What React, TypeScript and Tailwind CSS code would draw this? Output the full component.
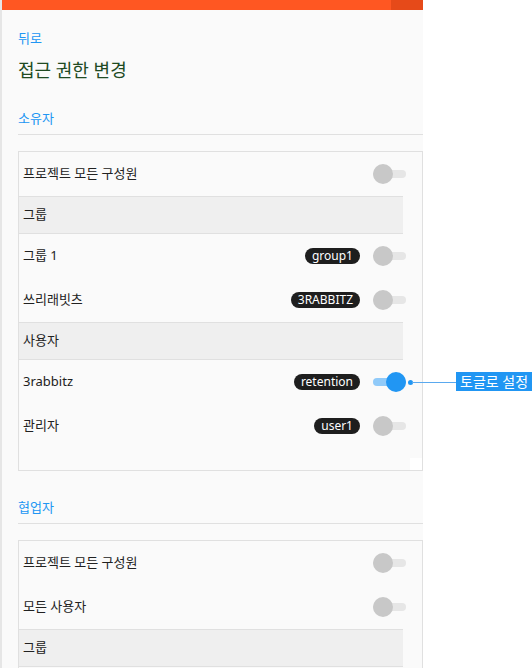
function Toggle({ on = false }: { on?: boolean }) {
  return (
    <div className="relative w-[33px] h-[20px] shrink-0">
      <div
        className={`absolute left-0 right-0 top-[6px] h-[8px] rounded-full ${on ? "bg-[#90caf9]" : "bg-[#e6e6e6]"}`}
      />
      <div
        className={`absolute top-0 size-[20px] rounded-full ${on ? "left-[13px] bg-[#2196f3]" : "left-0 bg-[#c8c8c8]"}`}
      />
    </div>
  )
}

function Chip({ label }: { label: string }) {
  return (
    <span className="h-[16px] px-[7px] rounded-full bg-[#1e1e1e] text-white text-[12px] leading-[16px] mr-[13px]">
      {label}
    </span>
  )
}

function Row({ label, chip, on }: { label: string; chip?: string; on?: boolean }) {
  return (
    <div className="h-[44px] flex items-center pl-[4px] pr-[16px]">
      <span className="flex-1 text-[13px] text-[#212121]">{label}</span>
      {chip && <Chip label={chip} />}
      <Toggle on={on} />
    </div>
  )
}

function GroupHeader({ label }: { label: string }) {
  return (
    <div className="h-[38px] mr-[19px] flex items-center pl-[4px] bg-[#efefef] border-y border-[#e0e0e0] text-[13px] text-[#212121]">
      {label}
    </div>
  )
}

function SectionLabel({ label }: { label: string }) {
  return (
    <div className="mt-[26px] pb-[6px] border-b border-[#e0e0e0] text-[13px] leading-[20px] text-[#2196f3]">
      {label}
    </div>
  )
}

export default function App() {
  return (
    <div className="relative w-[532px] h-[668px] overflow-hidden bg-white flex font-['Noto_Sans','Noto_Sans_CJK_KR',sans-serif]">
      {/* Panel */}
      <div className="w-[423px] shrink-0 bg-[#fafafa] border-l-2 border-[#e6e6e6] flex flex-col">
        <div className="h-[10px] flex shrink-0">
          <div className="flex-1 bg-[#ff5722]" />
          <div className="w-[32px] bg-[#e64a19]" />
        </div>

        <div className="pl-[16px] flex flex-col">
          <div className="mt-[19px] text-[13px] leading-[18px] text-[#2196f3]">뒤로</div>
          <div className="mt-[11px] text-[18px] leading-[24px] text-[#204a22]">접근 권한 변경</div>

          {/* 소유자 */}
          <SectionLabel label="소유자" />
          <div className="relative mt-4 border border-[#e0e0e0] pb-[22px]">
            <Row label="프로젝트 모든 구성원" />
            <GroupHeader label="그룹" />
            <Row label="그룹 1" chip="group1" />
            <Row label="쓰리래빗츠" chip="3RABBITZ" />
            <GroupHeader label="사용자" />
            <Row label="3rabbitz" chip="retention" on />
            <Row label="관리자" chip="user1" />
            <div className="absolute right-0 bottom-0 size-[12px] bg-white" />
          </div>

          {/* 협업자 */}
          <SectionLabel label="협업자" />
          <div className="mt-4 border border-[#e0e0e0] pb-[40px]">
            <Row label="프로젝트 모든 구성원" />
            <Row label="모든 사용자" />
            <GroupHeader label="그룹" />
          </div>
        </div>
      </div>

      {/* Callout */}
      <div className="absolute left-[408px] top-[380px] size-[5px] rounded-full bg-[#2196f3]" />
      <div className="absolute left-[412px] top-[382px] w-[44px] h-px bg-[#5aa9ef]" />
      <div className="absolute left-[456px] top-[372px] h-[19px] pl-[4px] pr-[4px] bg-[#2196f3] text-white text-[14px] leading-[19px] whitespace-nowrap">
        토글로 설정
      </div>
    </div>
  )
}
